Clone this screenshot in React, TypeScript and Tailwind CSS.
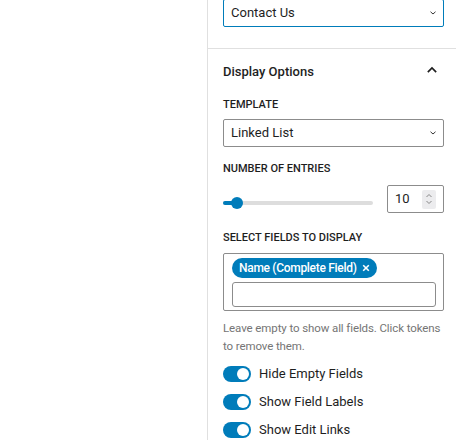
import React from "react";

const ChevronDown = () => (
  <svg width="12" height="12" viewBox="0 0 24 24" fill="none" stroke="#1e1e1e" strokeWidth="1.8">
    <path d="M7 9.5 L12 14 L17 9.5" />
  </svg>
);

const ChevronUp = () => (
  <svg width="20" height="20" viewBox="0 0 24 24" fill="none" stroke="#1e1e1e" strokeWidth="2">
    <path d="M7 14.5 L12 9.5 L17 14.5" />
  </svg>
);

const Toggle = ({ label }: { label: string }) => (
  <div className="flex items-center h-[16px]">
    <div className="relative w-[28px] h-[16px] rounded-full bg-[#007cba] shrink-0">
      <div className="absolute right-[2px] top-[2px] w-[12px] h-[12px] rounded-full bg-white" />
    </div>
    <span className="ml-[8px] text-[13px] leading-[16px] text-[#1e1e1e]">{label}</span>
  </div>
);

const Label = ({ children }: { children: React.ReactNode }) => (
  <div className="h-[16px] leading-[16px] text-[11px] font-medium uppercase text-[#1e1e1e]">{children}</div>
);

export default function App() {
  return (
    <div className="flex w-[456px] h-[440px] overflow-hidden bg-white" style={{ fontFamily: "Roboto, 'Noto Sans', sans-serif" }}>
      <div className="w-[207px] shrink-0" />
      <div className="flex-1 border-l border-[#e0e0e0] flex flex-col">
        <div className="pl-[15px] pr-[12px] pb-[21px]">
          <div className="-mt-[1px] h-[28px] border border-[#007cba] rounded-[2px] flex items-center justify-between pl-[7px] pr-[4px]">
            <span className="text-[13px] text-[#1e1e1e]">Contact Us</span>
            <ChevronDown />
          </div>
        </div>
        <div className="border-t border-[#e0e0e0] pl-[15px] pr-[12px] flex flex-col">
          <div className="h-[46px] flex items-center justify-between">
            <span className="text-[13px] font-medium text-[#1e1e1e]">Display Options</span>
            <span className="mr-[2px] mt-[-4px]"><ChevronUp /></span>
          </div>
          <div className="mt-[2px]">
            <Label>Template</Label>
          </div>
          <div className="mt-[6px] h-[28px] border border-[#8c8c8c] rounded-[2px] flex items-center justify-between pl-[7px] pr-[4px]">
            <span className="text-[13px] text-[#1e1e1e]">Linked List</span>
            <ChevronDown />
          </div>
          <div className="mt-[14px]">
            <Label>Number of entries</Label>
          </div>
          <div className="mt-[8px] h-[28px] flex items-center">
            <div className="relative w-[150px] h-[4px] mt-[8px] rounded-full bg-[#dddddd]">
              <div className="absolute left-0 top-0 h-[4px] w-[14px] rounded-l-full bg-[#007cba]" />
              <div className="absolute left-[8px] top-[-4px] w-[12px] h-[12px] rounded-full bg-[#007cba]" />
            </div>
            <div className="ml-[14px] w-[57px] h-[28px] border border-[#8c8c8c] rounded-[2px] flex items-center justify-between pl-[7px] pr-[7px]">
              <span className="text-[13px] text-[#1e1e1e]">10</span>
              <div className="w-[14px] h-[19px] bg-[#ececee] rounded-[2px] flex flex-col items-center justify-center">
                <svg width="8" height="14" viewBox="0 0 8 14" fill="none" stroke="#888" strokeWidth="1">
                  <path d="M1.5 5 L4 2.5 L6.5 5" />
                  <path d="M1.5 9 L4 11.5 L6.5 9" />
                </svg>
              </div>
            </div>
          </div>
          <div className="mt-[17px]">
            <Label>Select fields to display</Label>
          </div>
          <div className="mt-[7px] border border-[#8c8c8c] rounded-[2px] pt-[4px] pb-[3px] pl-[8px] pr-[7px] flex flex-col gap-[4px]">
            <div className="self-start h-[20px] rounded-full bg-[#007cba] flex items-center pl-[7px] pr-[7px] text-white">
              <span className="text-[12px] font-medium tracking-[-0.3px]">Name (Complete Field)</span>
              <svg className="ml-[5px]" width="8" height="8" viewBox="0 0 8 8" stroke="white" strokeWidth="1.6">
                <path d="M1.2 1.2 L6.8 6.8 M6.8 1.2 L1.2 6.8" />
              </svg>
            </div>
            <div className="h-[25px] border border-[#8c8c8c] rounded-[3px]" />
          </div>
          <div className="mt-[8px] text-[11.5px] tracking-[-0.1px] leading-[18px] text-[#757575]">
            Leave empty to show all fields. Click tokens to remove them.
          </div>
          <div className="mt-[11px] flex flex-col gap-[12px]">
            <Toggle label="Hide Empty Fields" />
            <Toggle label="Show Field Labels" />
            <Toggle label="Show Edit Links" />
          </div>
        </div>
      </div>
    </div>
  );
}
